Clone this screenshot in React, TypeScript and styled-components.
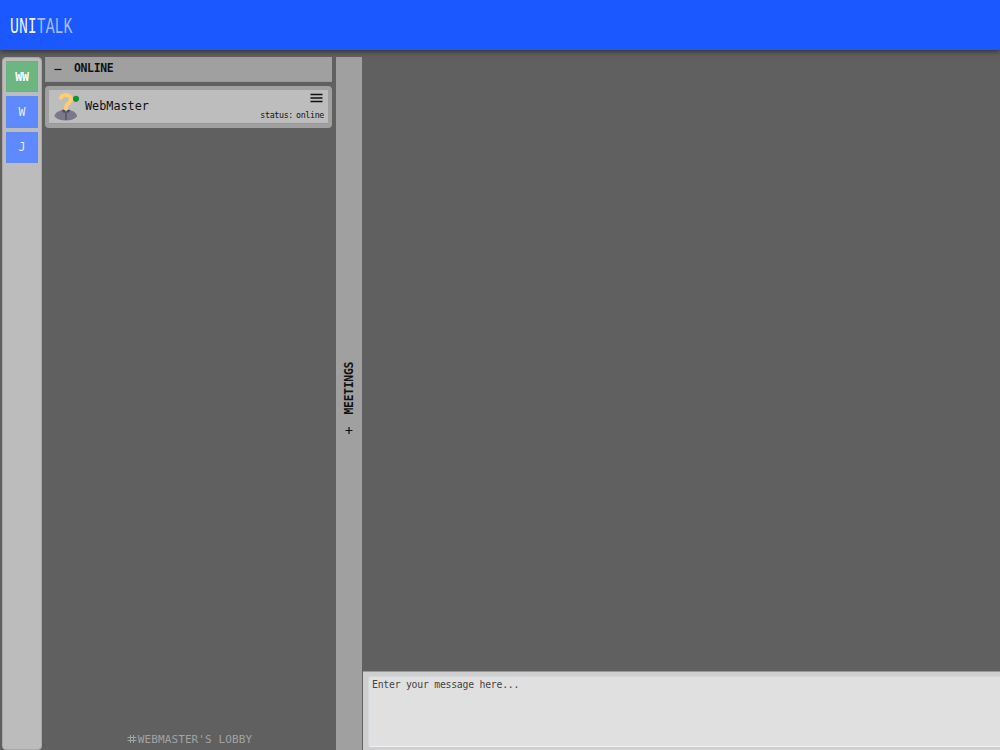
import React from "react";
import styled, { createGlobalStyle } from "styled-components";

const Global = createGlobalStyle`
  *{box-sizing:border-box}
  html,body{margin:0;height:100%;overflow:hidden}
  body{background:#606060;font-family:"DejaVu Sans Mono",monospace;color:#111}
  button{font:inherit;border:0;padding:0;color:inherit;background:none}
`;
const Page = styled.div`height:100vh;display:flex;flex-direction:column;`;
const Header = styled.header`
  height:50px;flex:none;background:#1c58ff;padding:3px 0 0 10px;display:flex;align-items:center;
  box-shadow:0 1px 6px rgba(0,0,0,.6);z-index:1;
`;
const Logo = styled.div`
  font:22.5px/48px "Liberation Mono",monospace;color:#f2f5ff;transform:scaleX(.66);transform-origin:0 50%;
  white-space:nowrap;
  span{color:#a4bcff}
`;
const Main = styled.main`flex:1;min-height:0;display:flex;padding:7px 0 0 2px;`;
const Rail = styled.nav`
  width:40px;background:#bcbcbc;border:1px solid #a8a8a8;border-radius:4px;padding:3px;
  display:flex;flex-direction:column;gap:4px;
`;
const Tile = styled.button<{ $color: string; $bold?: boolean }>`
  width:32px;height:31.3px;flex:none;background:${p => p.$color};color:${p => (p.$bold ? "#fff" : "#e8eeff")};
  font-size:11.5px;letter-spacing:${p => (p.$bold ? "-.2px" : "0")};font-weight:${p => (p.$bold ? 700 : 400)};
  box-shadow:inset 0 0 0 1px rgba(120,120,140,.12);
`;
const People = styled.section`width:287px;margin-left:3px;display:flex;flex-direction:column;`;
const SectionHead = styled.div`
  height:25px;background:#a0a0a0;border:1px solid #999;border-width:0 0 1px 1px;display:flex;align-items:center;
  font-weight:700;padding:0 0 1px 8px;gap:12px;
`;
const Word = styled.span`font-size:11.4px;letter-spacing:-.3px;margin-top:-1px;`;
const Card = styled.div`
  margin-top:4px;height:42px;background:#a0a0a0;border-radius:4px;padding:4px;display:flex;
`;
const CardInner = styled.div`
  flex:1;height:34px;background:#bdbdbd;border-bottom:1px solid #999;display:flex;align-items:center;padding-left:4px;
`;
const Name = styled.div`font-size:11.8px;letter-spacing:0;margin:-1px 0 0 6px;flex:1;`;
const Side = styled.div`
  height:100%;display:flex;flex-direction:column;align-items:flex-end;justify-content:space-between;padding:3px 4px 3px 0;
`;
const Status = styled.div`display:flex;gap:3px;font-size:8.3px;line-height:10px;letter-spacing:-.33px;`;
const Lobby = styled.div`
  margin-top:auto;height:22px;display:flex;justify-content:center;align-items:center;gap:1px;
  color:#a3a3a3;font-size:11px;letter-spacing:.1px;padding-left:2px;
`;
const Meetings = styled.aside`
  width:26px;margin-left:4px;background:#a0a0a0;display:flex;flex-direction:column;align-items:center;padding-top:305px;gap:12px;
`;
const Vertical = styled.div`
  writing-mode:vertical-rl;transform:rotate(180deg);font-size:11.4px;font-weight:700;letter-spacing:-.3px;line-height:26px;
`;
const Chat = styled.section`flex:1;margin-left:1px;display:flex;flex-direction:column;justify-content:flex-end;`;
const Composer = styled.div`height:79px;background:#cfcfcf;border-top:1px solid #999;padding:4px 0 3px 5px;`;
const Input = styled.textarea`
  display:block;width:100%;height:71px;border:1px solid #d2d8dc;border-width:1px 0 1px 1px;border-bottom-color:#eef0f4;border-radius:3px 0 0 3px;
  background:#e0e0e0;resize:none;outline:none;padding:1px 3px;font:9.8px/14px "DejaVu Sans Mono",monospace;letter-spacing:-.24px;
  &::placeholder{color:#444;opacity:1}
`;

const Avatar = () => (
  <svg width="26" height="30" viewBox="0 0 26 30">
    <path d="M1.500 24.500c0-3.500 4-5.500 8-6.500l3.500 2 3.500-2c4 1 7.500 3 7.500 6.500-3 3-7 4-11.200 4S4.500 27.500 1.500 24.500z" fill="#7b7889" />
    <path d="m8.500 18 2.500-.5 2 2 2-2 2.500.5-2.500 3-2-1.500-2 1.500z" fill="#4d4a5c" />
    <path d="M13 20v8" stroke="#454252" />
    <path d="M8 7.500C7.500 4.200 9.500 3 12.700 3S18 4.800 18 7.500c0 3.800-5 4-5 7.500v3" fill="none" stroke="#ffcc72" strokeWidth="4.200" strokeLinejoin="round" />
    <circle cx="23" cy="6.800" r="3.100" fill="#12932e" />
  </svg>
);
const Menu = () => (
  <svg width="14" height="10" viewBox="0 0 14 10">
    <path d="M.5 1.500h12M.5 5h12M.5 8.500h12" stroke="#111" strokeWidth="1.500" />
  </svg>
);
const Toggle = ({ plus = false }: { plus?: boolean }) => (
  <svg width="8" height="9" viewBox="0 0 8 9">
    <path d={plus ? "M.5 4.500h7M4 1v7" : "M.5 5.500h7"} stroke="#111" strokeWidth="1.200" />
  </svg>
);
const Hash = () => (
  <svg width="10" height="10" viewBox="0 0 10 10">
    <path d="M.5 3.500h9M.5 6.500h9M3.500 1v8M6.500 1v8" stroke="#a3a3a3" />
  </svg>
);

export default function App() {
  return (
    <Page>
      <Global />
      <Header><Logo>UNI<span>TALK</span></Logo></Header>
      <Main>
        <Rail>
          <Tile $color="#6cb681" $bold>WW</Tile>
          <Tile $color="#5f89ff">W</Tile>
          <Tile $color="#5f89ff">J</Tile>
        </Rail>
        <People>
          <SectionHead><Toggle /><Word>ONLINE</Word></SectionHead>
          <Card>
            <CardInner>
              <Avatar />
              <Name>WebMaster</Name>
              <Side>
                <Menu />
                <Status><span>status:</span><span>online</span></Status>
              </Side>
            </CardInner>
          </Card>
          <Lobby><Hash /><span>WEBMASTER'S LOBBY</span></Lobby>
        </People>
        <Meetings><Vertical>MEETINGS</Vertical><Toggle plus /></Meetings>
        <Chat><Composer><Input placeholder="Enter your message here..." /></Composer></Chat>
      </Main>
    </Page>
  );
}
